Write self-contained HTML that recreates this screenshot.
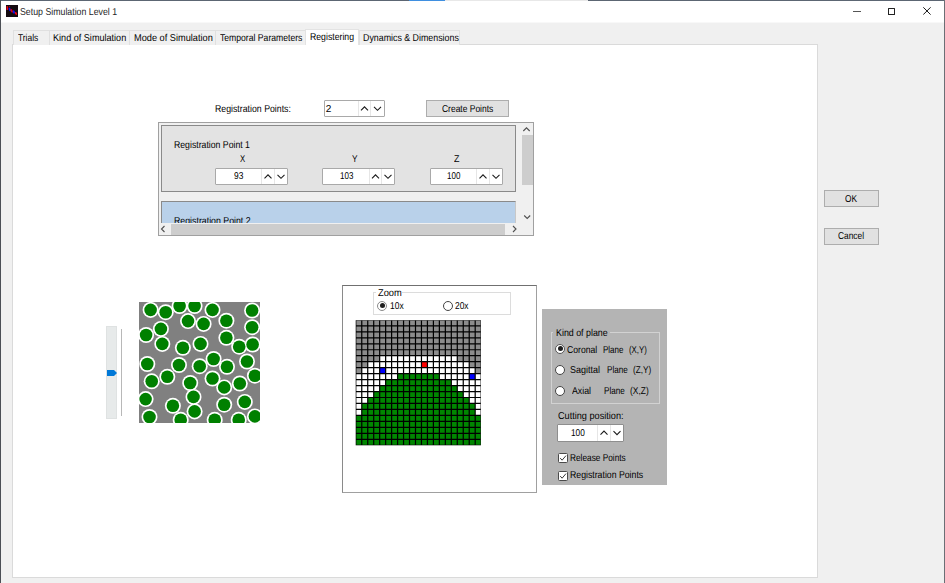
<!DOCTYPE html>
<html><head><meta charset="utf-8">
<style>
*{box-sizing:border-box;margin:0;padding:0}
html,body{width:945px;height:583px;overflow:hidden;background:#f0f0f0;font-family:"Liberation Sans",sans-serif;color:#000}
.a{position:absolute}
.t{position:absolute;white-space:nowrap;line-height:10px;font-size:10px;color:#000;transform-origin:0 0;text-rendering:geometricPrecision}
.tab{position:absolute;top:30px;height:15px;background:#f0f0f0;border:1px solid #e0e0e0;border-bottom:none}
.spin{position:absolute;background:#fff;border:1px solid #a9a9a9;border-radius:1px}
.btn{position:absolute;background:#e1e1e1;border:1px solid #adadad}
.radio{position:absolute;width:10px;height:10px;border-radius:50%;border:1px solid #333;background:#fff}
.chk{position:absolute;width:10px;height:10px;border:1px solid #4a4a4a;background:#fff;border-radius:1.5px}
</style></head>
<body>
<div class="a" style="left:0;top:0;width:945px;height:22px;background:#fff"></div>
<div class="a" style="left:0;top:22px;width:945px;height:1px;background:#f8f8f8"></div>
<div class="a" style="left:0;top:0;width:409px;height:1px;background:#5c6673"></div>
<div class="a" style="left:409px;top:0;width:36px;height:1px;background:#3f8fe0"></div>
<div class="a" style="left:445px;top:0;width:143px;height:1px;background:#e8e8e8"></div>
<div class="a" style="left:588px;top:0;width:357px;height:1px;background:#5c6673"></div>
<div class="a" style="left:0;top:0;width:1px;height:583px;background:#4b4f55"></div>
<div class="a" style="left:944px;top:0;width:1px;height:583px;background:#6b6f75"></div>
<svg class="a" style="left:6px;top:5px" width="12" height="12"><rect width="12" height="12" fill="#140a10"/><rect x="0.5" y="1.2" width="1.6" height="3.8" fill="#f00010"/><rect x="3" y="1.2" width="1" height="1" fill="#c00010"/><ellipse cx="3.8" cy="4.5" rx="1" ry="1.8" fill="#1010f0" transform="rotate(-25 3.8 4.5)"/><ellipse cx="5.65" cy="5.8" rx="1" ry="2" fill="#e00010" transform="rotate(-25 5.65 5.8)"/><ellipse cx="7.8" cy="7" rx="1" ry="1.7" fill="#1010f0" transform="rotate(-25 7.8 7)"/><ellipse cx="9.95" cy="8.45" rx="1" ry="1.6" fill="#f00010" transform="rotate(-25 9.95 8.45)"/></svg>
<div class="a" style="left:853px;top:10.5px;width:7.5px;height:1.2px;background:#555"></div>
<div class="a" style="left:887.5px;top:7.5px;width:7.5px;height:7.5px;border:1px solid #222;border-radius:0.5px"></div>
<svg class="a" style="left:922.5px;top:7.2px" width="9" height="9"><path d="M0.3 0.3 L7.6 7.6 M7.6 0.3 L0.3 7.6" stroke="#1a1a1a" stroke-width="1"/></svg>
<div class="a" style="left:12px;top:44px;width:806px;height:534px;background:#fff;border:1px solid #dadada"></div>
<div class="tab" style="left:13px;width:37px"></div>
<div class="tab" style="left:49px;width:81px"></div>
<div class="tab" style="left:129px;width:87px"></div>
<div class="tab" style="left:215px;width:91px"></div>
<div class="tab" style="left:359px;width:101px"></div>
<div class="a" style="left:305px;top:28.5px;width:54px;height:16.5px;background:#fff;border:1px solid #e3e3e3;border-bottom:none"></div>
<div class="spin" style="left:324px;top:100px;width:61px;height:17px"></div><div class="a" style="left:358px;top:101px;width:1px;height:15px;background:#e6e6e6"></div><div class="a" style="left:370px;top:101px;width:1px;height:15px;background:#e6e6e6"></div><svg class="a" style="left:0;top:0;overflow:visible" width="1" height="1"><path d="M361.0 110.3 L364.5 106.8 L368.0 110.3" fill="none" stroke="#1a1a1a" stroke-width="1.1"/><path d="M374.0 106.8 L377.5 110.3 L381.0 106.8" fill="none" stroke="#1a1a1a" stroke-width="1.1"/></svg>
<div class="btn" style="left:426px;top:100px;width:83px;height:17px"></div>
<div class="a" style="left:158px;top:122px;width:376px;height:114px;background:#f0f0f0;border:1px solid #a0a0a0"></div>
<div class="a" style="left:161px;top:125px;width:355px;height:67px;background:#e3e3e3;border:1px solid #8a8a8a"></div>
<div class="spin" style="left:215px;top:168px;width:73px;height:17px"></div><div class="a" style="left:261px;top:169px;width:1px;height:15px;background:#e6e6e6"></div><div class="a" style="left:274px;top:169px;width:1px;height:15px;background:#e6e6e6"></div><svg class="a" style="left:0;top:0;overflow:visible" width="1" height="1"><path d="M264.5 178.3 L268.0 174.8 L271.5 178.3" fill="none" stroke="#1a1a1a" stroke-width="1.1"/><path d="M277.5 174.8 L281.0 178.3 L284.5 174.8" fill="none" stroke="#1a1a1a" stroke-width="1.1"/></svg>
<div class="spin" style="left:322px;top:168px;width:73px;height:17px"></div><div class="a" style="left:369px;top:169px;width:1px;height:15px;background:#e6e6e6"></div><div class="a" style="left:381px;top:169px;width:1px;height:15px;background:#e6e6e6"></div><svg class="a" style="left:0;top:0;overflow:visible" width="1" height="1"><path d="M372.0 178.3 L375.5 174.8 L379.0 178.3" fill="none" stroke="#1a1a1a" stroke-width="1.1"/><path d="M384.5 174.8 L388.0 178.3 L391.5 174.8" fill="none" stroke="#1a1a1a" stroke-width="1.1"/></svg>
<div class="spin" style="left:430px;top:168px;width:73px;height:17px"></div><div class="a" style="left:476px;top:169px;width:1px;height:15px;background:#e6e6e6"></div><div class="a" style="left:489px;top:169px;width:1px;height:15px;background:#e6e6e6"></div><svg class="a" style="left:0;top:0;overflow:visible" width="1" height="1"><path d="M479.5 178.3 L483.0 174.8 L486.5 178.3" fill="none" stroke="#1a1a1a" stroke-width="1.1"/><path d="M492.5 174.8 L496.0 178.3 L499.5 174.8" fill="none" stroke="#1a1a1a" stroke-width="1.1"/></svg>
<div class="a" style="left:161px;top:201px;width:355px;height:23px;background:#b9d1ea;border:1px solid #8a8a8a;border-right-color:#c8c8c8;border-bottom:none"></div>
<div class="a" style="left:520px;top:123px;width:13px;height:100px;background:#f0f0f0"></div>
<div class="a" style="left:521.5px;top:135px;width:11px;height:50px;background:#cdcdcd"></div>
<svg class="a" style="left:520px;top:123px" width="13" height="100"><path d="M3.3 8 L6.5 4.8 L9.7 8" fill="none" stroke="#505050" stroke-width="1.1"/><path d="M4.2 92.5 L7.2 95.5 L10.2 92.5" fill="none" stroke="#505050" stroke-width="1.1"/></svg>
<div class="a" style="left:159px;top:223px;width:361px;height:12px;background:#f0f0f0"></div>
<div class="a" style="left:171px;top:224px;width:334px;height:11px;background:#cdcdcd"></div>
<svg class="a" style="left:159px;top:223px" width="361" height="12"><path d="M5.5 3 L2.5 6 L5.5 9" fill="none" stroke="#505050" stroke-width="1.1"/><path d="M354 3 L357 6 L354 9" fill="none" stroke="#505050" stroke-width="1.1"/></svg>
<div class="btn" style="left:823.5px;top:190.2px;width:55px;height:17px"></div>
<div class="btn" style="left:823.5px;top:227.6px;width:55px;height:17px"></div>
<div class="a" style="left:106px;top:326px;width:11px;height:93px;background:#e7eaea;border:1px solid #dfe2e2"></div>
<div class="a" style="left:120.5px;top:329px;width:1px;height:87px;background:#b8b8b8"></div>
<svg class="a" style="left:107px;top:370px" width="11" height="7"><path d="M0 0 H7 L10 3 L7 6 H0 Z" fill="#0078d7"/></svg>
<svg class="a" style="left:139px;top:302px" width="121" height="121"><rect width="121" height="121" fill="#808080"/><g fill="#fff"><circle cx="11.6" cy="7.9" r="8"/><circle cx="26.7" cy="10.2" r="8"/><circle cx="40.6" cy="4.0" r="8"/><circle cx="55.6" cy="4.0" r="8"/><circle cx="73.5" cy="7.9" r="8"/><circle cx="113.1" cy="8.5" r="8"/><circle cx="49.0" cy="19.1" r="8"/><circle cx="64.6" cy="21.9" r="8"/><circle cx="87.4" cy="18.7" r="8"/><circle cx="113.1" cy="25.2" r="8"/><circle cx="21.9" cy="26.9" r="8"/><circle cx="7.1" cy="33.0" r="8"/><circle cx="87.4" cy="35.8" r="8"/><circle cx="23.3" cy="41.9" r="8"/><circle cx="43.9" cy="45.8" r="8"/><circle cx="61.5" cy="41.9" r="8"/><circle cx="100.2" cy="44.7" r="8"/><circle cx="113.6" cy="42.5" r="8"/><circle cx="74.6" cy="57.0" r="8"/><circle cx="8.3" cy="62.0" r="8"/><circle cx="40.0" cy="63.0" r="8"/><circle cx="60.7" cy="64.2" r="8"/><circle cx="88.0" cy="64.8" r="8"/><circle cx="108.0" cy="59.5" r="8"/><circle cx="115.9" cy="73.7" r="8"/><circle cx="12.7" cy="79.3" r="8"/><circle cx="28.3" cy="74.8" r="8"/><circle cx="51.2" cy="81.0" r="8"/><circle cx="73.5" cy="76.5" r="8"/><circle cx="85.2" cy="85.4" r="8"/><circle cx="100.8" cy="81.5" r="8"/><circle cx="6.6" cy="97.1" r="8"/><circle cx="54.5" cy="94.9" r="8"/><circle cx="33.9" cy="103.8" r="8"/><circle cx="55.6" cy="109.4" r="8"/><circle cx="85.2" cy="102.7" r="8"/><circle cx="105.8" cy="99.9" r="8"/><circle cx="10.5" cy="115.0" r="8"/><circle cx="41.7" cy="117.8" r="8"/><circle cx="75.7" cy="117.8" r="8"/><circle cx="99.7" cy="117.8" r="8"/><circle cx="115.9" cy="114.4" r="8"/></g><g fill="#008000"><circle cx="11.6" cy="7.9" r="6.3"/><circle cx="26.7" cy="10.2" r="6.3"/><circle cx="40.6" cy="4.0" r="6.3"/><circle cx="55.6" cy="4.0" r="6.3"/><circle cx="73.5" cy="7.9" r="6.3"/><circle cx="113.1" cy="8.5" r="6.3"/><circle cx="49.0" cy="19.1" r="6.3"/><circle cx="64.6" cy="21.9" r="6.3"/><circle cx="87.4" cy="18.7" r="6.3"/><circle cx="113.1" cy="25.2" r="6.3"/><circle cx="21.9" cy="26.9" r="6.3"/><circle cx="7.1" cy="33.0" r="6.3"/><circle cx="87.4" cy="35.8" r="6.3"/><circle cx="23.3" cy="41.9" r="6.3"/><circle cx="43.9" cy="45.8" r="6.3"/><circle cx="61.5" cy="41.9" r="6.3"/><circle cx="100.2" cy="44.7" r="6.3"/><circle cx="113.6" cy="42.5" r="6.3"/><circle cx="74.6" cy="57.0" r="6.3"/><circle cx="8.3" cy="62.0" r="6.3"/><circle cx="40.0" cy="63.0" r="6.3"/><circle cx="60.7" cy="64.2" r="6.3"/><circle cx="88.0" cy="64.8" r="6.3"/><circle cx="108.0" cy="59.5" r="6.3"/><circle cx="115.9" cy="73.7" r="6.3"/><circle cx="12.7" cy="79.3" r="6.3"/><circle cx="28.3" cy="74.8" r="6.3"/><circle cx="51.2" cy="81.0" r="6.3"/><circle cx="73.5" cy="76.5" r="6.3"/><circle cx="85.2" cy="85.4" r="6.3"/><circle cx="100.8" cy="81.5" r="6.3"/><circle cx="6.6" cy="97.1" r="6.3"/><circle cx="54.5" cy="94.9" r="6.3"/><circle cx="33.9" cy="103.8" r="6.3"/><circle cx="55.6" cy="109.4" r="6.3"/><circle cx="85.2" cy="102.7" r="6.3"/><circle cx="105.8" cy="99.9" r="6.3"/><circle cx="10.5" cy="115.0" r="6.3"/><circle cx="41.7" cy="117.8" r="6.3"/><circle cx="75.7" cy="117.8" r="6.3"/><circle cx="99.7" cy="117.8" r="6.3"/><circle cx="115.9" cy="114.4" r="6.3"/></g></svg>
<div class="a" style="left:342px;top:285px;width:195px;height:208px;background:#fff;border:1px solid #a0a0a0;border-top-color:#707070;border-left-color:#8a8a8a"></div>
<div class="a" style="left:373px;top:292px;width:138px;height:23px;border:1px solid #dcdcdc"></div>
<div class="a" style="left:376px;top:287px;width:26px;height:9px;background:#fff"></div>
<div class="radio" style="left:377.4px;top:300.5px;border-color:#8a8a8a"></div><div class="a" style="left:379.8px;top:302.9px;width:5.2px;height:5.2px;border-radius:50%;background:#1e1e1e"></div>
<div class="radio" style="left:443.0px;top:300.5px;border-color:#444"></div>
<svg class="a" style="left:350px;top:315px" width="140" height="140"><rect x="5.7" y="5.2" width="125.2" height="125.1" fill="#000"/><path fill="#8c8c8c" d="M6.40 5.50h4.75v4.75h-4.75zM12.37 5.50h4.75v4.75h-4.75zM18.34 5.50h4.75v4.75h-4.75zM24.31 5.50h4.75v4.75h-4.75zM30.28 5.50h4.75v4.75h-4.75zM36.25 5.50h4.75v4.75h-4.75zM42.22 5.50h4.75v4.75h-4.75zM48.19 5.50h4.75v4.75h-4.75zM54.16 5.50h4.75v4.75h-4.75zM60.13 5.50h4.75v4.75h-4.75zM66.10 5.50h4.75v4.75h-4.75zM72.07 5.50h4.75v4.75h-4.75zM78.04 5.50h4.75v4.75h-4.75zM84.01 5.50h4.75v4.75h-4.75zM89.98 5.50h4.75v4.75h-4.75zM95.95 5.50h4.75v4.75h-4.75zM101.92 5.50h4.75v4.75h-4.75zM107.89 5.50h4.75v4.75h-4.75zM113.86 5.50h4.75v4.75h-4.75zM119.83 5.50h4.75v4.75h-4.75zM125.80 5.50h4.75v4.75h-4.75zM6.40 11.47h4.75v4.75h-4.75zM12.37 11.47h4.75v4.75h-4.75zM18.34 11.47h4.75v4.75h-4.75zM24.31 11.47h4.75v4.75h-4.75zM30.28 11.47h4.75v4.75h-4.75zM36.25 11.47h4.75v4.75h-4.75zM42.22 11.47h4.75v4.75h-4.75zM48.19 11.47h4.75v4.75h-4.75zM54.16 11.47h4.75v4.75h-4.75zM60.13 11.47h4.75v4.75h-4.75zM66.10 11.47h4.75v4.75h-4.75zM72.07 11.47h4.75v4.75h-4.75zM78.04 11.47h4.75v4.75h-4.75zM84.01 11.47h4.75v4.75h-4.75zM89.98 11.47h4.75v4.75h-4.75zM95.95 11.47h4.75v4.75h-4.75zM101.92 11.47h4.75v4.75h-4.75zM107.89 11.47h4.75v4.75h-4.75zM113.86 11.47h4.75v4.75h-4.75zM119.83 11.47h4.75v4.75h-4.75zM125.80 11.47h4.75v4.75h-4.75zM6.40 17.44h4.75v4.75h-4.75zM12.37 17.44h4.75v4.75h-4.75zM18.34 17.44h4.75v4.75h-4.75zM24.31 17.44h4.75v4.75h-4.75zM30.28 17.44h4.75v4.75h-4.75zM36.25 17.44h4.75v4.75h-4.75zM42.22 17.44h4.75v4.75h-4.75zM48.19 17.44h4.75v4.75h-4.75zM54.16 17.44h4.75v4.75h-4.75zM60.13 17.44h4.75v4.75h-4.75zM66.10 17.44h4.75v4.75h-4.75zM72.07 17.44h4.75v4.75h-4.75zM78.04 17.44h4.75v4.75h-4.75zM84.01 17.44h4.75v4.75h-4.75zM89.98 17.44h4.75v4.75h-4.75zM95.95 17.44h4.75v4.75h-4.75zM101.92 17.44h4.75v4.75h-4.75zM107.89 17.44h4.75v4.75h-4.75zM113.86 17.44h4.75v4.75h-4.75zM119.83 17.44h4.75v4.75h-4.75zM125.80 17.44h4.75v4.75h-4.75zM6.40 23.41h4.75v4.75h-4.75zM12.37 23.41h4.75v4.75h-4.75zM18.34 23.41h4.75v4.75h-4.75zM24.31 23.41h4.75v4.75h-4.75zM30.28 23.41h4.75v4.75h-4.75zM36.25 23.41h4.75v4.75h-4.75zM42.22 23.41h4.75v4.75h-4.75zM48.19 23.41h4.75v4.75h-4.75zM54.16 23.41h4.75v4.75h-4.75zM60.13 23.41h4.75v4.75h-4.75zM66.10 23.41h4.75v4.75h-4.75zM72.07 23.41h4.75v4.75h-4.75zM78.04 23.41h4.75v4.75h-4.75zM84.01 23.41h4.75v4.75h-4.75zM89.98 23.41h4.75v4.75h-4.75zM95.95 23.41h4.75v4.75h-4.75zM101.92 23.41h4.75v4.75h-4.75zM107.89 23.41h4.75v4.75h-4.75zM113.86 23.41h4.75v4.75h-4.75zM119.83 23.41h4.75v4.75h-4.75zM125.80 23.41h4.75v4.75h-4.75zM6.40 29.38h4.75v4.75h-4.75zM12.37 29.38h4.75v4.75h-4.75zM18.34 29.38h4.75v4.75h-4.75zM24.31 29.38h4.75v4.75h-4.75zM30.28 29.38h4.75v4.75h-4.75zM36.25 29.38h4.75v4.75h-4.75zM42.22 29.38h4.75v4.75h-4.75zM48.19 29.38h4.75v4.75h-4.75zM54.16 29.38h4.75v4.75h-4.75zM60.13 29.38h4.75v4.75h-4.75zM66.10 29.38h4.75v4.75h-4.75zM72.07 29.38h4.75v4.75h-4.75zM78.04 29.38h4.75v4.75h-4.75zM84.01 29.38h4.75v4.75h-4.75zM89.98 29.38h4.75v4.75h-4.75zM95.95 29.38h4.75v4.75h-4.75zM101.92 29.38h4.75v4.75h-4.75zM107.89 29.38h4.75v4.75h-4.75zM113.86 29.38h4.75v4.75h-4.75zM119.83 29.38h4.75v4.75h-4.75zM125.80 29.38h4.75v4.75h-4.75zM6.40 35.35h4.75v4.75h-4.75zM12.37 35.35h4.75v4.75h-4.75zM18.34 35.35h4.75v4.75h-4.75zM24.31 35.35h4.75v4.75h-4.75zM30.28 35.35h4.75v4.75h-4.75zM36.25 35.35h4.75v4.75h-4.75zM42.22 35.35h4.75v4.75h-4.75zM48.19 35.35h4.75v4.75h-4.75zM54.16 35.35h4.75v4.75h-4.75zM60.13 35.35h4.75v4.75h-4.75zM66.10 35.35h4.75v4.75h-4.75zM72.07 35.35h4.75v4.75h-4.75zM78.04 35.35h4.75v4.75h-4.75zM84.01 35.35h4.75v4.75h-4.75zM89.98 35.35h4.75v4.75h-4.75zM95.95 35.35h4.75v4.75h-4.75zM101.92 35.35h4.75v4.75h-4.75zM107.89 35.35h4.75v4.75h-4.75zM113.86 35.35h4.75v4.75h-4.75zM119.83 35.35h4.75v4.75h-4.75zM125.80 35.35h4.75v4.75h-4.75zM6.40 41.32h4.75v4.75h-4.75zM12.37 41.32h4.75v4.75h-4.75zM18.34 41.32h4.75v4.75h-4.75zM24.31 41.32h4.75v4.75h-4.75zM107.89 41.32h4.75v4.75h-4.75zM113.86 41.32h4.75v4.75h-4.75zM119.83 41.32h4.75v4.75h-4.75zM125.80 41.32h4.75v4.75h-4.75zM6.40 47.29h4.75v4.75h-4.75zM12.37 47.29h4.75v4.75h-4.75zM119.83 47.29h4.75v4.75h-4.75zM125.80 47.29h4.75v4.75h-4.75zM6.40 53.26h4.75v4.75h-4.75zM125.80 53.26h4.75v4.75h-4.75z"/><path fill="#fff" d="M30.28 41.32h4.75v4.75h-4.75zM36.25 41.32h4.75v4.75h-4.75zM42.22 41.32h4.75v4.75h-4.75zM48.19 41.32h4.75v4.75h-4.75zM54.16 41.32h4.75v4.75h-4.75zM60.13 41.32h4.75v4.75h-4.75zM66.10 41.32h4.75v4.75h-4.75zM72.07 41.32h4.75v4.75h-4.75zM78.04 41.32h4.75v4.75h-4.75zM84.01 41.32h4.75v4.75h-4.75zM89.98 41.32h4.75v4.75h-4.75zM95.95 41.32h4.75v4.75h-4.75zM101.92 41.32h4.75v4.75h-4.75zM18.34 47.29h4.75v4.75h-4.75zM24.31 47.29h4.75v4.75h-4.75zM30.28 47.29h4.75v4.75h-4.75zM36.25 47.29h4.75v4.75h-4.75zM42.22 47.29h4.75v4.75h-4.75zM48.19 47.29h4.75v4.75h-4.75zM54.16 47.29h4.75v4.75h-4.75zM60.13 47.29h4.75v4.75h-4.75zM66.10 47.29h4.75v4.75h-4.75zM78.04 47.29h4.75v4.75h-4.75zM84.01 47.29h4.75v4.75h-4.75zM89.98 47.29h4.75v4.75h-4.75zM95.95 47.29h4.75v4.75h-4.75zM101.92 47.29h4.75v4.75h-4.75zM107.89 47.29h4.75v4.75h-4.75zM113.86 47.29h4.75v4.75h-4.75zM12.37 53.26h4.75v4.75h-4.75zM18.34 53.26h4.75v4.75h-4.75zM24.31 53.26h4.75v4.75h-4.75zM36.25 53.26h4.75v4.75h-4.75zM42.22 53.26h4.75v4.75h-4.75zM48.19 53.26h4.75v4.75h-4.75zM54.16 53.26h4.75v4.75h-4.75zM60.13 53.26h4.75v4.75h-4.75zM66.10 53.26h4.75v4.75h-4.75zM72.07 53.26h4.75v4.75h-4.75zM78.04 53.26h4.75v4.75h-4.75zM84.01 53.26h4.75v4.75h-4.75zM89.98 53.26h4.75v4.75h-4.75zM95.95 53.26h4.75v4.75h-4.75zM101.92 53.26h4.75v4.75h-4.75zM107.89 53.26h4.75v4.75h-4.75zM113.86 53.26h4.75v4.75h-4.75zM119.83 53.26h4.75v4.75h-4.75zM6.40 59.23h4.75v4.75h-4.75zM12.37 59.23h4.75v4.75h-4.75zM18.34 59.23h4.75v4.75h-4.75zM24.31 59.23h4.75v4.75h-4.75zM30.28 59.23h4.75v4.75h-4.75zM36.25 59.23h4.75v4.75h-4.75zM42.22 59.23h4.75v4.75h-4.75zM89.98 59.23h4.75v4.75h-4.75zM95.95 59.23h4.75v4.75h-4.75zM101.92 59.23h4.75v4.75h-4.75zM107.89 59.23h4.75v4.75h-4.75zM113.86 59.23h4.75v4.75h-4.75zM125.80 59.23h4.75v4.75h-4.75zM6.40 65.20h4.75v4.75h-4.75zM12.37 65.20h4.75v4.75h-4.75zM18.34 65.20h4.75v4.75h-4.75zM24.31 65.20h4.75v4.75h-4.75zM30.28 65.20h4.75v4.75h-4.75zM101.92 65.20h4.75v4.75h-4.75zM107.89 65.20h4.75v4.75h-4.75zM113.86 65.20h4.75v4.75h-4.75zM119.83 65.20h4.75v4.75h-4.75zM125.80 65.20h4.75v4.75h-4.75zM6.40 71.17h4.75v4.75h-4.75zM12.37 71.17h4.75v4.75h-4.75zM18.34 71.17h4.75v4.75h-4.75zM24.31 71.17h4.75v4.75h-4.75zM107.89 71.17h4.75v4.75h-4.75zM113.86 71.17h4.75v4.75h-4.75zM119.83 71.17h4.75v4.75h-4.75zM125.80 71.17h4.75v4.75h-4.75zM6.40 77.14h4.75v4.75h-4.75zM12.37 77.14h4.75v4.75h-4.75zM18.34 77.14h4.75v4.75h-4.75zM113.86 77.14h4.75v4.75h-4.75zM119.83 77.14h4.75v4.75h-4.75zM125.80 77.14h4.75v4.75h-4.75zM6.40 83.11h4.75v4.75h-4.75zM12.37 83.11h4.75v4.75h-4.75zM119.83 83.11h4.75v4.75h-4.75zM125.80 83.11h4.75v4.75h-4.75zM6.40 89.08h4.75v4.75h-4.75zM125.80 89.08h4.75v4.75h-4.75zM6.40 95.05h4.75v4.75h-4.75zM125.80 95.05h4.75v4.75h-4.75z"/><path fill="#f00" d="M72.07 47.29h4.75v4.75h-4.75z"/><path fill="#00f" d="M30.28 53.26h4.75v4.75h-4.75zM119.83 59.23h4.75v4.75h-4.75z"/><path fill="#008600" d="M48.19 59.23h4.75v4.75h-4.75zM54.16 59.23h4.75v4.75h-4.75zM60.13 59.23h4.75v4.75h-4.75zM66.10 59.23h4.75v4.75h-4.75zM72.07 59.23h4.75v4.75h-4.75zM78.04 59.23h4.75v4.75h-4.75zM84.01 59.23h4.75v4.75h-4.75zM36.25 65.20h4.75v4.75h-4.75zM42.22 65.20h4.75v4.75h-4.75zM48.19 65.20h4.75v4.75h-4.75zM54.16 65.20h4.75v4.75h-4.75zM60.13 65.20h4.75v4.75h-4.75zM66.10 65.20h4.75v4.75h-4.75zM72.07 65.20h4.75v4.75h-4.75zM78.04 65.20h4.75v4.75h-4.75zM84.01 65.20h4.75v4.75h-4.75zM89.98 65.20h4.75v4.75h-4.75zM95.95 65.20h4.75v4.75h-4.75zM30.28 71.17h4.75v4.75h-4.75zM36.25 71.17h4.75v4.75h-4.75zM42.22 71.17h4.75v4.75h-4.75zM48.19 71.17h4.75v4.75h-4.75zM54.16 71.17h4.75v4.75h-4.75zM60.13 71.17h4.75v4.75h-4.75zM66.10 71.17h4.75v4.75h-4.75zM72.07 71.17h4.75v4.75h-4.75zM78.04 71.17h4.75v4.75h-4.75zM84.01 71.17h4.75v4.75h-4.75zM89.98 71.17h4.75v4.75h-4.75zM95.95 71.17h4.75v4.75h-4.75zM101.92 71.17h4.75v4.75h-4.75zM24.31 77.14h4.75v4.75h-4.75zM30.28 77.14h4.75v4.75h-4.75zM36.25 77.14h4.75v4.75h-4.75zM42.22 77.14h4.75v4.75h-4.75zM48.19 77.14h4.75v4.75h-4.75zM54.16 77.14h4.75v4.75h-4.75zM60.13 77.14h4.75v4.75h-4.75zM66.10 77.14h4.75v4.75h-4.75zM72.07 77.14h4.75v4.75h-4.75zM78.04 77.14h4.75v4.75h-4.75zM84.01 77.14h4.75v4.75h-4.75zM89.98 77.14h4.75v4.75h-4.75zM95.95 77.14h4.75v4.75h-4.75zM101.92 77.14h4.75v4.75h-4.75zM107.89 77.14h4.75v4.75h-4.75zM18.34 83.11h4.75v4.75h-4.75zM24.31 83.11h4.75v4.75h-4.75zM30.28 83.11h4.75v4.75h-4.75zM36.25 83.11h4.75v4.75h-4.75zM42.22 83.11h4.75v4.75h-4.75zM48.19 83.11h4.75v4.75h-4.75zM54.16 83.11h4.75v4.75h-4.75zM60.13 83.11h4.75v4.75h-4.75zM66.10 83.11h4.75v4.75h-4.75zM72.07 83.11h4.75v4.75h-4.75zM78.04 83.11h4.75v4.75h-4.75zM84.01 83.11h4.75v4.75h-4.75zM89.98 83.11h4.75v4.75h-4.75zM95.95 83.11h4.75v4.75h-4.75zM101.92 83.11h4.75v4.75h-4.75zM107.89 83.11h4.75v4.75h-4.75zM113.86 83.11h4.75v4.75h-4.75zM12.37 89.08h4.75v4.75h-4.75zM18.34 89.08h4.75v4.75h-4.75zM24.31 89.08h4.75v4.75h-4.75zM30.28 89.08h4.75v4.75h-4.75zM36.25 89.08h4.75v4.75h-4.75zM42.22 89.08h4.75v4.75h-4.75zM48.19 89.08h4.75v4.75h-4.75zM54.16 89.08h4.75v4.75h-4.75zM60.13 89.08h4.75v4.75h-4.75zM66.10 89.08h4.75v4.75h-4.75zM72.07 89.08h4.75v4.75h-4.75zM78.04 89.08h4.75v4.75h-4.75zM84.01 89.08h4.75v4.75h-4.75zM89.98 89.08h4.75v4.75h-4.75zM95.95 89.08h4.75v4.75h-4.75zM101.92 89.08h4.75v4.75h-4.75zM107.89 89.08h4.75v4.75h-4.75zM113.86 89.08h4.75v4.75h-4.75zM119.83 89.08h4.75v4.75h-4.75zM12.37 95.05h4.75v4.75h-4.75zM18.34 95.05h4.75v4.75h-4.75zM24.31 95.05h4.75v4.75h-4.75zM30.28 95.05h4.75v4.75h-4.75zM36.25 95.05h4.75v4.75h-4.75zM42.22 95.05h4.75v4.75h-4.75zM48.19 95.05h4.75v4.75h-4.75zM54.16 95.05h4.75v4.75h-4.75zM60.13 95.05h4.75v4.75h-4.75zM66.10 95.05h4.75v4.75h-4.75zM72.07 95.05h4.75v4.75h-4.75zM78.04 95.05h4.75v4.75h-4.75zM84.01 95.05h4.75v4.75h-4.75zM89.98 95.05h4.75v4.75h-4.75zM95.95 95.05h4.75v4.75h-4.75zM101.92 95.05h4.75v4.75h-4.75zM107.89 95.05h4.75v4.75h-4.75zM113.86 95.05h4.75v4.75h-4.75zM119.83 95.05h4.75v4.75h-4.75zM6.40 101.02h4.75v4.75h-4.75zM12.37 101.02h4.75v4.75h-4.75zM18.34 101.02h4.75v4.75h-4.75zM24.31 101.02h4.75v4.75h-4.75zM30.28 101.02h4.75v4.75h-4.75zM36.25 101.02h4.75v4.75h-4.75zM42.22 101.02h4.75v4.75h-4.75zM48.19 101.02h4.75v4.75h-4.75zM54.16 101.02h4.75v4.75h-4.75zM60.13 101.02h4.75v4.75h-4.75zM66.10 101.02h4.75v4.75h-4.75zM72.07 101.02h4.75v4.75h-4.75zM78.04 101.02h4.75v4.75h-4.75zM84.01 101.02h4.75v4.75h-4.75zM89.98 101.02h4.75v4.75h-4.75zM95.95 101.02h4.75v4.75h-4.75zM101.92 101.02h4.75v4.75h-4.75zM107.89 101.02h4.75v4.75h-4.75zM113.86 101.02h4.75v4.75h-4.75zM119.83 101.02h4.75v4.75h-4.75zM125.80 101.02h4.75v4.75h-4.75zM6.40 106.99h4.75v4.75h-4.75zM12.37 106.99h4.75v4.75h-4.75zM18.34 106.99h4.75v4.75h-4.75zM24.31 106.99h4.75v4.75h-4.75zM30.28 106.99h4.75v4.75h-4.75zM36.25 106.99h4.75v4.75h-4.75zM42.22 106.99h4.75v4.75h-4.75zM48.19 106.99h4.75v4.75h-4.75zM54.16 106.99h4.75v4.75h-4.75zM60.13 106.99h4.75v4.75h-4.75zM66.10 106.99h4.75v4.75h-4.75zM72.07 106.99h4.75v4.75h-4.75zM78.04 106.99h4.75v4.75h-4.75zM84.01 106.99h4.75v4.75h-4.75zM89.98 106.99h4.75v4.75h-4.75zM95.95 106.99h4.75v4.75h-4.75zM101.92 106.99h4.75v4.75h-4.75zM107.89 106.99h4.75v4.75h-4.75zM113.86 106.99h4.75v4.75h-4.75zM119.83 106.99h4.75v4.75h-4.75zM125.80 106.99h4.75v4.75h-4.75zM6.40 112.96h4.75v4.75h-4.75zM12.37 112.96h4.75v4.75h-4.75zM18.34 112.96h4.75v4.75h-4.75zM24.31 112.96h4.75v4.75h-4.75zM30.28 112.96h4.75v4.75h-4.75zM36.25 112.96h4.75v4.75h-4.75zM42.22 112.96h4.75v4.75h-4.75zM48.19 112.96h4.75v4.75h-4.75zM54.16 112.96h4.75v4.75h-4.75zM60.13 112.96h4.75v4.75h-4.75zM66.10 112.96h4.75v4.75h-4.75zM72.07 112.96h4.75v4.75h-4.75zM78.04 112.96h4.75v4.75h-4.75zM84.01 112.96h4.75v4.75h-4.75zM89.98 112.96h4.75v4.75h-4.75zM95.95 112.96h4.75v4.75h-4.75zM101.92 112.96h4.75v4.75h-4.75zM107.89 112.96h4.75v4.75h-4.75zM113.86 112.96h4.75v4.75h-4.75zM119.83 112.96h4.75v4.75h-4.75zM125.80 112.96h4.75v4.75h-4.75zM6.40 118.93h4.75v4.75h-4.75zM12.37 118.93h4.75v4.75h-4.75zM18.34 118.93h4.75v4.75h-4.75zM24.31 118.93h4.75v4.75h-4.75zM30.28 118.93h4.75v4.75h-4.75zM36.25 118.93h4.75v4.75h-4.75zM42.22 118.93h4.75v4.75h-4.75zM48.19 118.93h4.75v4.75h-4.75zM54.16 118.93h4.75v4.75h-4.75zM60.13 118.93h4.75v4.75h-4.75zM66.10 118.93h4.75v4.75h-4.75zM72.07 118.93h4.75v4.75h-4.75zM78.04 118.93h4.75v4.75h-4.75zM84.01 118.93h4.75v4.75h-4.75zM89.98 118.93h4.75v4.75h-4.75zM95.95 118.93h4.75v4.75h-4.75zM101.92 118.93h4.75v4.75h-4.75zM107.89 118.93h4.75v4.75h-4.75zM113.86 118.93h4.75v4.75h-4.75zM119.83 118.93h4.75v4.75h-4.75zM125.80 118.93h4.75v4.75h-4.75zM6.40 124.90h4.75v4.75h-4.75zM12.37 124.90h4.75v4.75h-4.75zM18.34 124.90h4.75v4.75h-4.75zM24.31 124.90h4.75v4.75h-4.75zM30.28 124.90h4.75v4.75h-4.75zM36.25 124.90h4.75v4.75h-4.75zM42.22 124.90h4.75v4.75h-4.75zM48.19 124.90h4.75v4.75h-4.75zM54.16 124.90h4.75v4.75h-4.75zM60.13 124.90h4.75v4.75h-4.75zM66.10 124.90h4.75v4.75h-4.75zM72.07 124.90h4.75v4.75h-4.75zM78.04 124.90h4.75v4.75h-4.75zM84.01 124.90h4.75v4.75h-4.75zM89.98 124.90h4.75v4.75h-4.75zM95.95 124.90h4.75v4.75h-4.75zM101.92 124.90h4.75v4.75h-4.75zM107.89 124.90h4.75v4.75h-4.75zM113.86 124.90h4.75v4.75h-4.75zM119.83 124.90h4.75v4.75h-4.75zM125.80 124.90h4.75v4.75h-4.75z"/></svg>
<div class="a" style="left:542px;top:309px;width:125px;height:176px;background:#b4b4b4"></div>
<div class="a" style="left:550.5px;top:332px;width:109.5px;height:72px;border:1px solid #d2d2d2"></div>
<div class="a" style="left:553px;top:328px;width:57px;height:9px;background:#b4b4b4"></div>
<div class="radio" style="left:555.2px;top:343.8px;border-color:#555"></div><div class="a" style="left:557.6px;top:346.2px;width:5.2px;height:5.2px;border-radius:50%;background:#1e1e1e"></div>
<div class="radio" style="left:555.0px;top:364.8px;border-color:#444"></div>
<div class="radio" style="left:555.0px;top:385.6px;border-color:#444"></div>
<div class="spin" style="left:557px;top:424px;width:67px;height:17.5px;border-color:#8e8e8e"></div><div class="a" style="left:597px;top:425px;width:1px;height:15.5px;background:#e6e6e6"></div><div class="a" style="left:610px;top:425px;width:1px;height:15.5px;background:#e6e6e6"></div><svg class="a" style="left:0;top:0;overflow:visible" width="1" height="1"><path d="M600.5 434.6 L604.0 431.1 L607.5 434.6" fill="none" stroke="#1a1a1a" stroke-width="1.1"/><path d="M613.5 431.1 L617.0 434.6 L620.5 431.1" fill="none" stroke="#1a1a1a" stroke-width="1.1"/></svg>
<div class="chk" style="left:557.5px;top:452.5px"></div><svg class="a" style="left:557.5px;top:452.5px" width="10" height="10"><path d="M2.2 5.1 L4.1 7.2 L8 2.6" fill="none" stroke="#222" stroke-width="0.9"/></svg>
<div class="chk" style="left:557.5px;top:470.5px"></div><svg class="a" style="left:557.5px;top:470.5px" width="10" height="10"><path d="M2.2 5.1 L4.1 7.2 L8 2.6" fill="none" stroke="#222" stroke-width="0.9"/></svg>
<div class="t" style="left:20.30px;top:8.00px;font-size:10.0px;color:#1e1e1e;transform:scaleX(0.8779);">Setup Simulation Level 1</div>
<div class="t" style="left:17.50px;top:34.00px;font-size:10.0px;color:#000;transform:scaleX(0.8391);">Trials</div>
<div class="t" style="left:53.30px;top:34.00px;font-size:10.0px;color:#000;transform:scaleX(0.9083);">Kind of Simulation</div>
<div class="t" style="left:133.70px;top:34.00px;font-size:10.0px;color:#000;transform:scaleX(0.9208);">Mode of Simulation</div>
<div class="t" style="left:219.60px;top:34.00px;font-size:10.0px;color:#000;transform:scaleX(0.8620);">Temporal Parameters</div>
<div class="t" style="left:310.40px;top:33.00px;font-size:10.0px;color:#000;transform:scaleX(0.8697);">Registering</div>
<div class="t" style="left:363.20px;top:34.00px;font-size:10.0px;color:#000;transform:scaleX(0.8841);">Dynamics &amp; Dimensions</div>
<div class="t" style="left:214.70px;top:105.00px;font-size:10.0px;color:#000;transform:scaleX(0.8751);">Registration Points:</div>
<div class="t" style="left:325.70px;top:105.00px;font-size:10.0px;color:#000;">2</div>
<div class="t" style="left:441.50px;top:105.00px;font-size:10.0px;color:#000;transform:scaleX(0.8467);">Create Points</div>
<div class="t" style="left:174.00px;top:141.00px;font-size:10.0px;color:#000;transform:scaleX(0.8699);">Registration Point 1</div>
<div class="t" style="left:239.60px;top:155.00px;font-size:10.0px;color:#000;transform:scaleX(0.7714);">X</div>
<div class="t" style="left:352.40px;top:155.00px;font-size:10.0px;color:#000;transform:scaleX(0.8286);">Y</div>
<div class="t" style="left:453.90px;top:155.00px;font-size:10.0px;color:#000;transform:scaleX(0.9000);">Z</div>
<div class="t" style="left:234.00px;top:172.00px;font-size:10.0px;color:#000;transform:scaleX(0.8390);">93</div>
<div class="t" style="left:339.60px;top:172.00px;font-size:10.0px;color:#000;transform:scaleX(0.8001);">103</div>
<div class="t" style="left:447.00px;top:172.00px;font-size:10.0px;color:#000;transform:scaleX(0.8001);">100</div>
<div class="t" style="left:377.90px;top:289.00px;font-size:10.0px;color:#000;transform:scaleX(0.9314);">Zoom</div>
<div class="t" style="left:390.30px;top:302.00px;font-size:10.0px;color:#000;transform:scaleX(0.8435);">10x</div>
<div class="t" style="left:455.30px;top:302.00px;font-size:10.0px;color:#000;transform:scaleX(0.8373);">20x</div>
<div class="t" style="left:555.90px;top:329.00px;font-size:10.0px;color:#000;transform:scaleX(0.8858);">Kind of plane</div>
<div class="t" style="left:567.30px;top:346.00px;font-size:10.0px;color:#000;transform:scaleX(0.8621);">Coronal</div>
<div class="t" style="left:603.00px;top:346.00px;font-size:10.0px;color:#000;transform:scaleX(0.7957);">Plane</div>
<div class="t" style="left:629.40px;top:346.00px;font-size:10.0px;color:#000;transform:scaleX(0.7796);">(X,Y)</div>
<div class="t" style="left:569.70px;top:366.00px;font-size:10.0px;color:#000;transform:scaleX(0.8964);">Sagittal</div>
<div class="t" style="left:607.30px;top:366.00px;font-size:10.0px;color:#000;transform:scaleX(0.8072);">Plane</div>
<div class="t" style="left:633.40px;top:366.00px;font-size:10.0px;color:#000;transform:scaleX(0.8178);">(Z,Y)</div>
<div class="t" style="left:572.30px;top:387.00px;font-size:10.0px;color:#000;transform:scaleX(0.8763);">Axial</div>
<div class="t" style="left:603.70px;top:387.00px;font-size:10.0px;color:#000;transform:scaleX(0.8072);">Plane</div>
<div class="t" style="left:629.90px;top:387.00px;font-size:10.0px;color:#000;transform:scaleX(0.8407);">(X,Z)</div>
<div class="t" style="left:557.70px;top:412.00px;font-size:10.0px;color:#000;transform:scaleX(0.9136);">Cutting position:</div>
<div class="t" style="left:571.00px;top:429.00px;font-size:10.0px;color:#000;transform:scaleX(0.8293);">100</div>
<div class="t" style="left:569.80px;top:454.00px;font-size:10.0px;color:#000;transform:scaleX(0.8281);">Release Points</div>
<div class="t" style="left:569.80px;top:471.00px;font-size:10.0px;color:#000;transform:scaleX(0.8721);">Registration Points</div>
<div class="t" style="left:844.80px;top:195.00px;font-size:10.0px;color:#000;transform:scaleX(0.8323);">OK</div>
<div class="t" style="left:837.80px;top:232.00px;font-size:10.0px;color:#000;transform:scaleX(0.8348);">Cancel</div>
<div class="a" style="left:162px;top:202px;width:353px;height:21px;overflow:hidden">
<div class="t" style="left:12.00px;top:15.00px;font-size:10.0px;color:#000;transform:scaleX(0.8779);">Registration Point 2</div>
</div>
</body></html>
